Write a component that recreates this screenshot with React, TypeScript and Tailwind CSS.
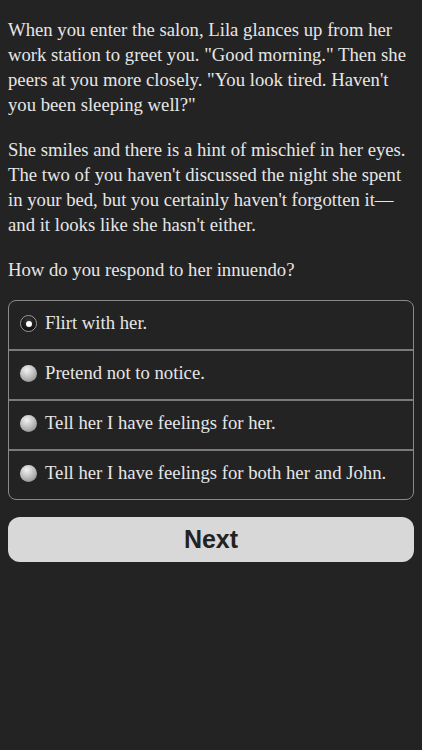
const options = [
  "Flirt with her.",
  "Pretend not to notice.",
  "Tell her I have feelings for her.",
  "Tell her I have feelings for both her and John.",
];

function Radio({ checked }: { checked: boolean }) {
  if (checked) {
    return (
      <span className="flex h-[17px] w-[17px] shrink-0 items-center justify-center rounded-full border border-[#9a9a9a] bg-[radial-gradient(circle_at_50%_35%,#3a3a3a,#111_70%)]">
        <span className="h-[6px] w-[6px] rounded-full bg-white" />
      </span>
    );
  }
  return (
    <span className="h-[17px] w-[17px] shrink-0 rounded-full bg-[radial-gradient(circle_at_40%_30%,#f2f2f2,#b5b5b5_55%,#7a7a7a)]" />
  );
}

export default function App() {
  return (
    <div className="min-h-[750px] bg-[#232323] px-2 pt-[17px] font-['Liberation_Serif',serif] text-[#e6e6e6]">
      <div className="space-y-[20px] text-[18.7px] leading-[25px]">
        <p>
          When you enter the salon, Lila glances up from her work station to greet you. "Good morning." Then she
          peers at you more closely. "You look tired. Haven't you been sleeping well?"
        </p>
        <p>
          She smiles and there is a hint of mischief in her eyes. The two of you haven't discussed the night she spent
          in your bed, but you certainly haven't forgotten it—and it looks like she hasn't either.
        </p>
        <p className="!mt-[16px]">How do you respond to her innuendo?</p>
      </div>

      <div className="mt-[18px] overflow-hidden rounded-[8px] border border-[#8a8a8a]">
        {options.map((o, i) => (
          <div
            key={o}
            className={`flex items-center gap-[8px] pb-[3px] pl-[11px] text-[18.7px] ${i > 0 ? "h-[50px] border-t-[2px] border-[#7a7a7a]" : "h-[48px]"}`}
          >
            <Radio checked={i === 0} />
            <span>{o}</span>
          </div>
        ))}
      </div>

      <button className="mt-[17px] flex h-[45px] w-full items-center justify-center rounded-[12px] bg-[#d8d8d8] font-['Liberation_Sans',sans-serif] text-[25px] font-bold text-[#222]">
        Next
      </button>
    </div>
  );
}
